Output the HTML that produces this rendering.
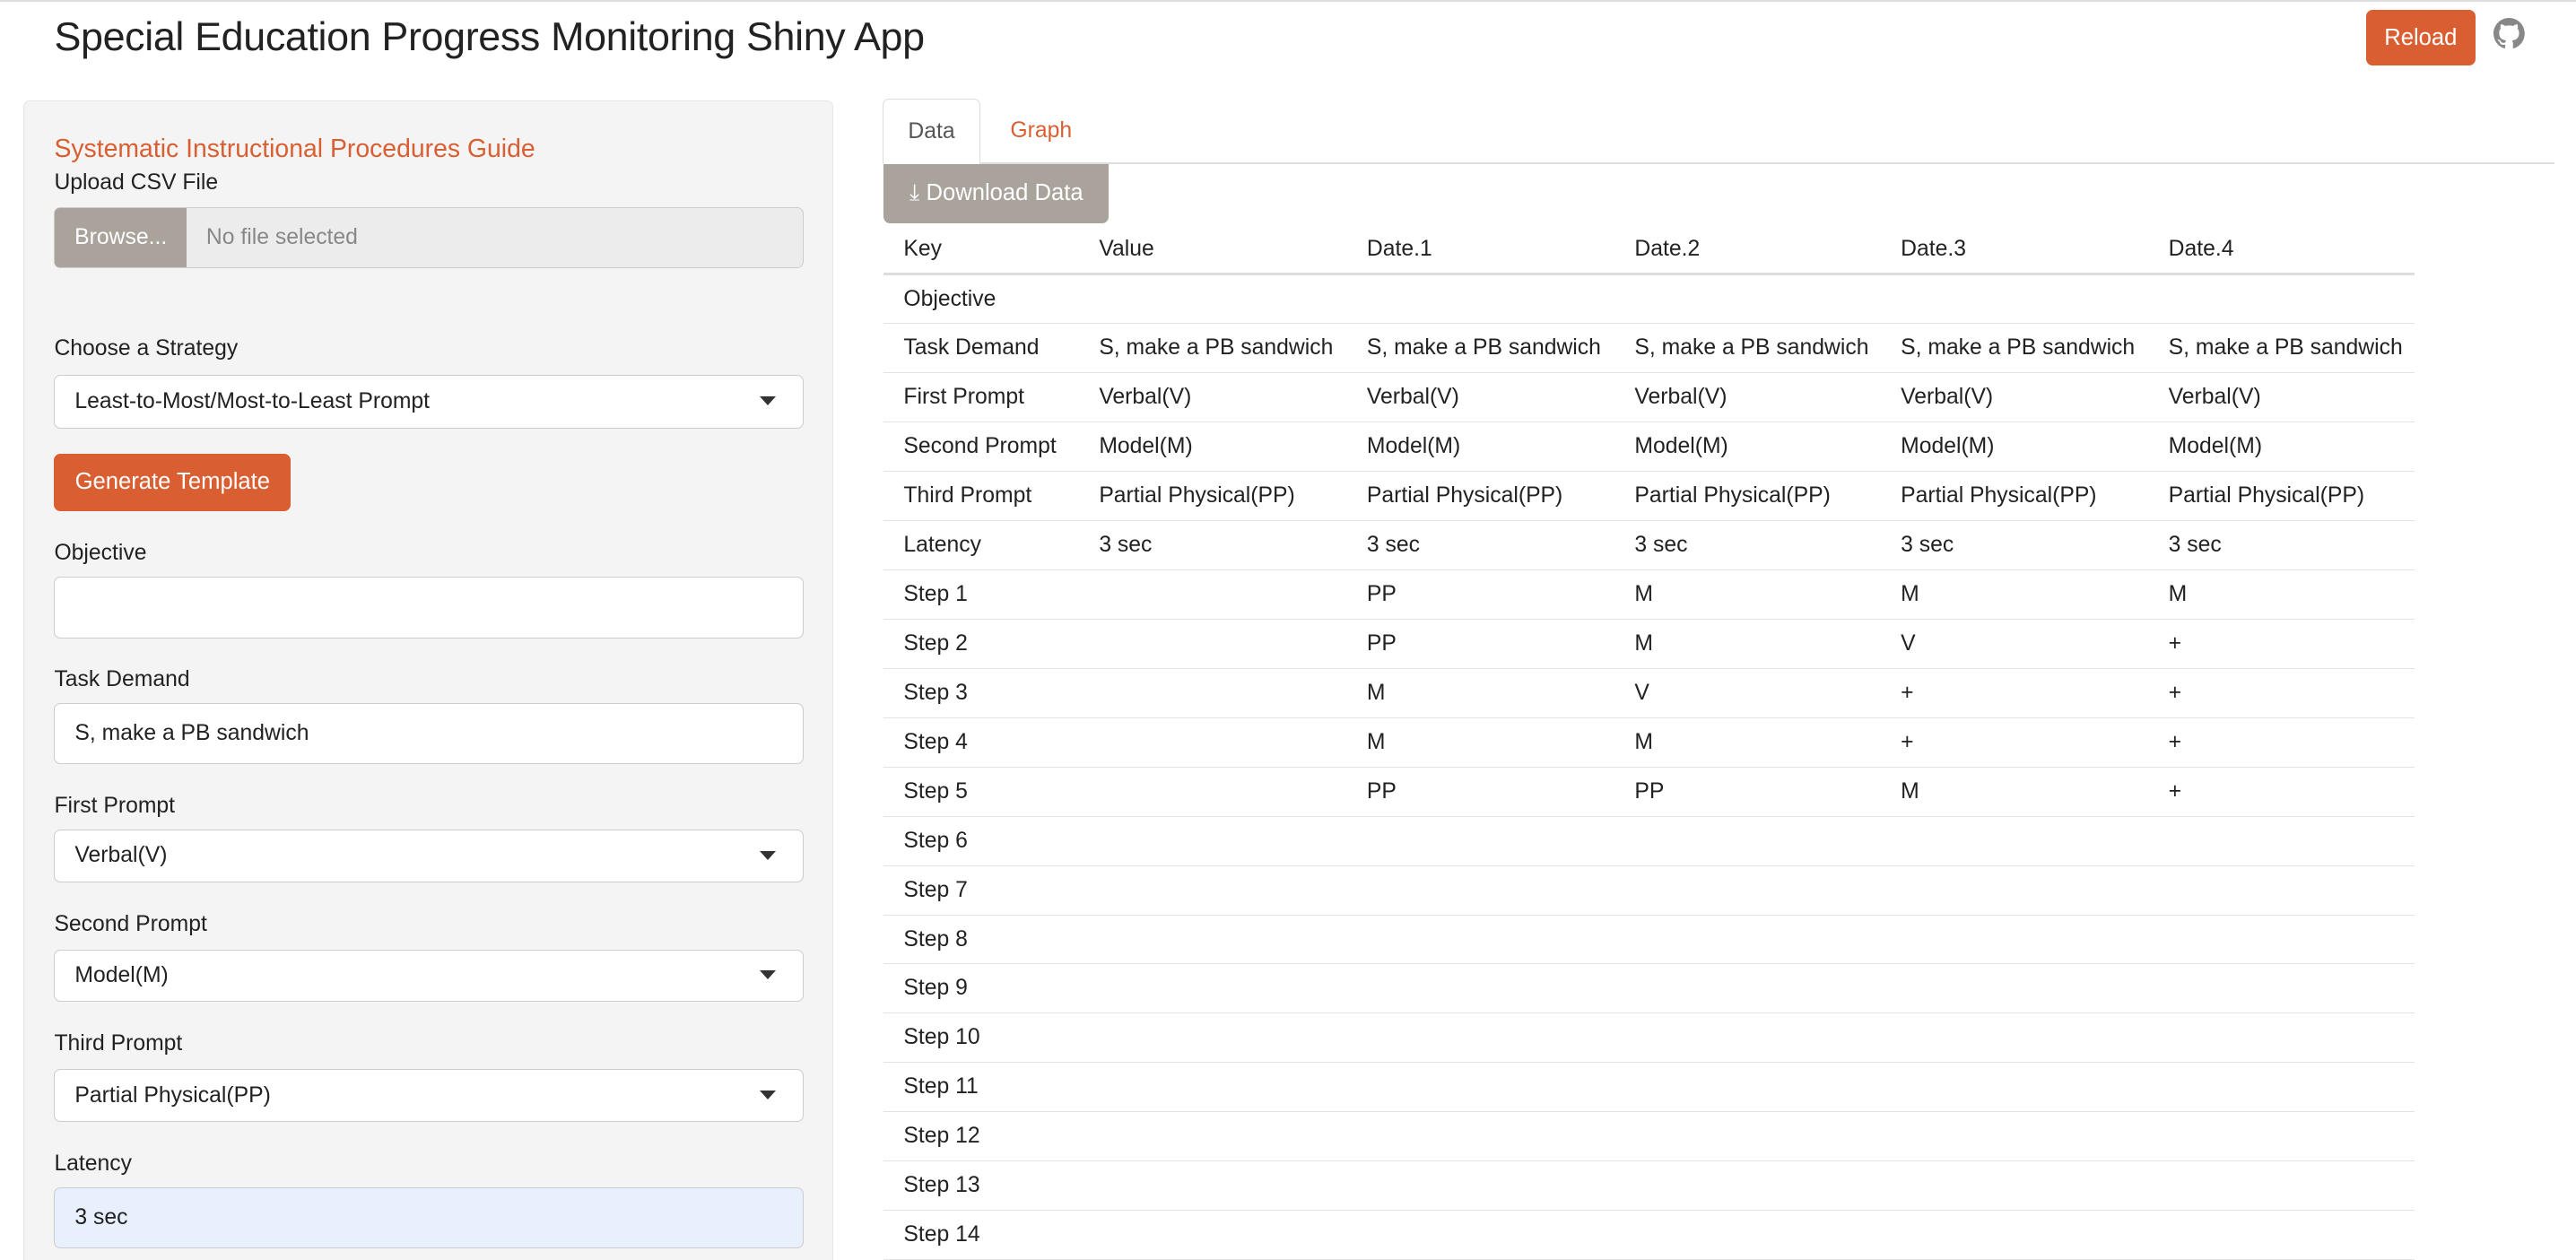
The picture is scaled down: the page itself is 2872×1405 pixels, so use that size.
<!DOCTYPE html>
<html><head><meta charset="utf-8"><style>
html,body{margin:0;padding:0;background:#fff;overflow:hidden}
body{width:1568px;height:767px;zoom:1.8316;font-family:"Liberation Sans",sans-serif;color:#222;position:relative}
.a{position:absolute}
.topline{left:0;top:0;width:1568px;height:1px;background:#ddd}
h1{position:absolute;left:33px;top:8px;margin:0;font-weight:400;font-size:24.5px;color:#222;letter-spacing:-0.2px}
.btn{position:absolute;border-radius:4px;color:#fff;font-size:14px;display:flex;align-items:center;justify-content:center}
.side{left:14px;top:61px;width:493px;height:720px;background:#f4f4f4;border:1px solid #e5e5e5;border-radius:4px;box-sizing:border-box}
.lbl{position:absolute;left:33px;font-size:13.5px;color:#222}
.inp{position:absolute;left:33px;width:456px;background:#fff;border:1px solid #ccc;border-radius:4px;box-sizing:border-box;font-size:13.5px;padding-left:12px;display:flex;align-items:center}
.car{position:absolute;right:16px;top:50%;margin-top:-3px;width:0;height:0;border-left:5px solid transparent;border-right:5px solid transparent;border-top:6px solid #333}
table{position:absolute;left:538px;top:137px;width:932px;border-collapse:collapse;font-size:13.5px;table-layout:fixed}
tr{height:30px}
td,th{padding:0 0 0 12px;text-align:left;font-weight:400;border-bottom:1px solid #e3e3e3;white-space:nowrap}
th{border-bottom:2px solid #ddd}
</style></head><body>
<div class="a topline"></div>
<h1>Special Education Progress Monitoring Shiny App</h1>
<div class="btn" style="left:1440px;top:6px;width:67px;height:34px;background:#d95f33">Reload</div>
<svg class="a" style="left:1518px;top:11px" width="19" height="19" viewBox="0 0 16 16"><path fill="#888" d="M8 0C3.58 0 0 3.58 0 8c0 3.54 2.29 6.530 5.47 7.59.4.07.55-.17.55-.38 0-.19-.01-.82-.01-1.49-2.010.37-2.53-.49-2.69-.94-.09-.23-.48-.94-.82-1.13-.28-.15-.68-.52-.01-.53.63-.01 1.08.58 1.23.82.72 1.21 1.87.87 2.33.66.07-.52.28-.87.51-1.07-1.78-.2-3.64-.89-3.64-3.95 0-.87.31-1.59.82-2.15-.08-.2-.36-1.02.08-2.12 0 0 .67-.21 2.2.82.64-.18 1.32-.27 2-.27.68 0 1.36.09 2 .27 1.53-1.04 2.2-.82 2.2-.82.44 1.1.16 1.92.08 2.12.51.56.82 1.27.82 2.15 0 3.07-1.87 3.75-3.65 3.95.29.25.54.73.54 1.48 0 1.07-.01 1.93-.01 2.2 0 .21.15.46.55.38A8.013 8.013 0 0016 8c0-4.42-3.58-8-8-8z"/></svg>

<div class="a side"></div>
<div class="lbl" style="top:82px;font-size:15.5px;color:#d95f33">Systematic Instructional Procedures Guide</div>
<div class="lbl" style="top:104px">Upload CSV File</div>
<div class="inp" style="top:126px;height:37px;background:#ececec;padding-left:0">
 <div style="width:80px;height:100%;background:#aaa39c;color:#fff;display:flex;align-items:center;justify-content:center;border-radius:3px 0 0 3px">Browse...</div>
 <span style="margin-left:12px;color:#888">No file selected</span></div>
<div class="lbl" style="top:205px">Choose a Strategy</div>
<div class="inp" style="top:228px;height:33px">Least-to-Most/Most-to-Least Prompt<div class="car"></div></div>
<div class="btn" style="left:33px;top:276px;width:144px;height:35px;background:#d95f33">Generate Template</div>
<div class="lbl" style="top:329px">Objective</div>
<div class="inp" style="top:351px;height:38px"></div>
<div class="lbl" style="top:406px">Task Demand</div>
<div class="inp" style="top:428px;height:37px">S, make a PB sandwich</div>
<div class="lbl" style="top:483px">First Prompt</div>
<div class="inp" style="top:505px;height:32px">Verbal(V)<div class="car"></div></div>
<div class="lbl" style="top:555px">Second Prompt</div>
<div class="inp" style="top:578px;height:32px">Model(M)<div class="car"></div></div>
<div class="lbl" style="top:628px">Third Prompt</div>
<div class="inp" style="top:651px;height:32px">Partial Physical(PP)<div class="car"></div></div>
<div class="lbl" style="top:701px">Latency</div>
<div class="inp" style="top:723px;height:37px;background:#e8f0fe">3 sec</div>

<div class="a" style="left:538px;top:99px;width:1017px;height:1px;background:#ddd"></div>
<div class="a" style="left:537px;top:60px;width:60px;height:40px;background:#fff;border:1px solid #ddd;border-bottom:none;border-radius:4px 4px 0 0;box-sizing:border-box;font-size:13.5px;color:#555;display:flex;align-items:center;justify-content:center">Data</div>
<div class="a" style="left:615px;top:72px;font-size:13.5px;color:#d95f33">Graph</div>
<div class="btn" style="left:538px;top:100px;width:137px;height:36px;background:#aaa39c;border-radius:0 0 4px 4px">&#x2913;&nbsp;Download Data</div>

<table>
<colgroup><col style="width:119px"><col style="width:163px"><col style="width:163px"><col style="width:162px"><col style="width:163px"><col></colgroup>
<tr><th>Key</th><th>Value</th><th>Date.1</th><th>Date.2</th><th>Date.3</th><th>Date.4</th></tr>
<tr><td>Objective</td><td></td><td></td><td></td><td></td><td></td></tr>
<tr><td>Task Demand</td><td>S, make a PB sandwich</td><td>S, make a PB sandwich</td><td>S, make a PB sandwich</td><td>S, make a PB sandwich</td><td>S, make a PB sandwich</td></tr>
<tr><td>First Prompt</td><td>Verbal(V)</td><td>Verbal(V)</td><td>Verbal(V)</td><td>Verbal(V)</td><td>Verbal(V)</td></tr>
<tr><td>Second Prompt</td><td>Model(M)</td><td>Model(M)</td><td>Model(M)</td><td>Model(M)</td><td>Model(M)</td></tr>
<tr><td>Third Prompt</td><td>Partial Physical(PP)</td><td>Partial Physical(PP)</td><td>Partial Physical(PP)</td><td>Partial Physical(PP)</td><td>Partial Physical(PP)</td></tr>
<tr><td>Latency</td><td>3 sec</td><td>3 sec</td><td>3 sec</td><td>3 sec</td><td>3 sec</td></tr>
<tr><td>Step 1</td><td></td><td>PP</td><td>M</td><td>M</td><td>M</td></tr>
<tr><td>Step 2</td><td></td><td>PP</td><td>M</td><td>V</td><td>+</td></tr>
<tr><td>Step 3</td><td></td><td>M</td><td>V</td><td>+</td><td>+</td></tr>
<tr><td>Step 4</td><td></td><td>M</td><td>M</td><td>+</td><td>+</td></tr>
<tr><td>Step 5</td><td></td><td>PP</td><td>PP</td><td>M</td><td>+</td></tr>
<tr><td>Step 6</td><td></td><td></td><td></td><td></td><td></td></tr>
<tr><td>Step 7</td><td></td><td></td><td></td><td></td><td></td></tr>
<tr><td>Step 8</td><td></td><td></td><td></td><td></td><td></td></tr>
<tr><td>Step 9</td><td></td><td></td><td></td><td></td><td></td></tr>
<tr><td>Step 10</td><td></td><td></td><td></td><td></td><td></td></tr>
<tr><td>Step 11</td><td></td><td></td><td></td><td></td><td></td></tr>
<tr><td>Step 12</td><td></td><td></td><td></td><td></td><td></td></tr>
<tr><td>Step 13</td><td></td><td></td><td></td><td></td><td></td></tr>
<tr><td>Step 14</td><td></td><td></td><td></td><td></td><td></td></tr>
</table>
</body></html>
